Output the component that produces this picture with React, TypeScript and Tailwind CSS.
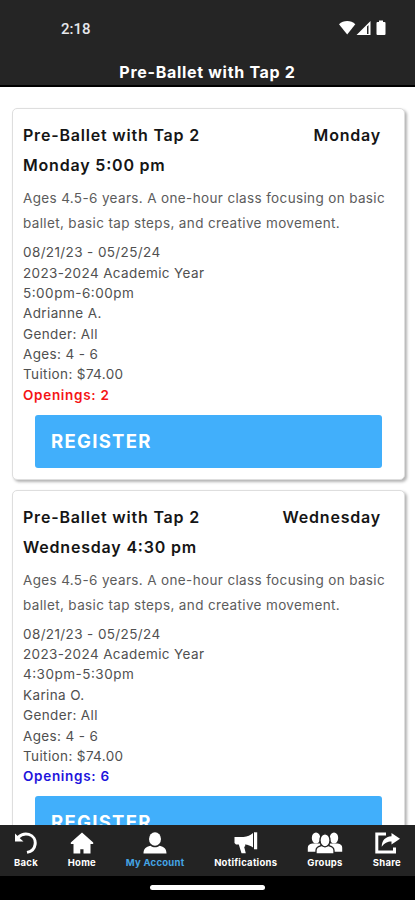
import { clsx } from 'clsx';

interface DanceClass {
  name: string;
  day: string;
  startsAt: string;
  dates: string;
  session: string;
  hours: string;
  teacher: string;
  openings: number;
}

const description =
  'Ages 4.5-6 years. A one-hour class focusing on basic ballet, basic tap steps, and creative movement.';

const classes: DanceClass[] = [
  {
    name: 'Pre-Ballet with Tap 2',
    day: 'Monday',
    startsAt: '5:00 pm',
    dates: '08/21/23 - 05/25/24',
    session: '2023-2024 Academic Year',
    hours: '5:00pm-6:00pm',
    teacher: 'Adrianne A.',
    openings: 2,
  },
  {
    name: 'Pre-Ballet with Tap 2',
    day: 'Wednesday',
    startsAt: '4:30 pm',
    dates: '08/21/23 - 05/25/24',
    session: '2023-2024 Academic Year',
    hours: '4:30pm-5:30pm',
    teacher: 'Karina O.',
    openings: 6,
  },
];

const navItems = [
  {
    label: 'Back',
    width: 24,
    icon: (
      <>
        <path d="M1 1.5V9.500h8.5L6.4 6.700z" fill="currentColor" />
        <path
          d="M3.8 5.600C7 2.6 11 1.300 14.800 2.4c4.6 1.4 7 5.6 6.3 10-.6 4-3.800 7.200-8.100 8"
          fill="none"
          stroke="currentColor"
          strokeWidth="3"
        />
      </>
    ),
  },
  {
    label: 'Home',
    width: 24,
    icon: (
      <path
        d="M12 .5.8 10.500v1.500H3.500v9.500h6.800v-4.300h3.200v4.300H20.500V12h2.700v-1.500z"
        fill="currentColor"
      />
    ),
  },
  {
    label: 'My Account',
    width: 24,
    active: true,
    // stays white, only the label is tinted
    icon: (
      <g fill="#fff">
        <ellipse cx="12" cy="7" rx="6" ry="6.700" />
        <path d="M.5 21.500c0-4.500 2.300-6.500 7-7.700 2.800 2 6.200 2 9 0 4.700 1.200 7 3.200 7 7.700z" />
      </g>
    ),
  },
  {
    label: 'Notifications',
    width: 24,
    icon: (
      <>
        <path d="M.5 5h9C13.500 4.700 16.500 3 19 1v14.500c-2.500-1.700-5-2.700-8-3l.3 1.600-1.100.8 1.600 6.300H7.500L4.800 12.500H2L.5 11z" fill="currentColor" />
        <path d="M20 .3h3.200v17H20z" fill="currentColor" />
      </>
    ),
  },
  {
    label: 'Groups',
    width: 36,
    icon: (
      <>
        <g fill="currentColor">
          <ellipse cx="9" cy="6" rx="4.200" ry="5.500" />
          <ellipse cx="27" cy="6" rx="4.200" ry="5.500" />
          <path d="M.8 19.800v-4c0-2.600 1.500-3.700 4.500-4.300h8v8.300z" />
          <path d="M35.200 19.800v-4c0-2.600-1.500-3.700-4.500-4.300h-8v8.300z" />
        </g>
        <g fill="currentColor" stroke="#232323" strokeWidth="1.300">
          <path d="M9 22v-3.500c0-3 1.600-4 5.500-4.800h7c3.900.8 5.500 1.800 5.500 4.800V22z" />
          <ellipse cx="18" cy="8.300" rx="5" ry="6.500" />
        </g>
      </>
    ),
  },
  {
    label: 'Share',
    width: 26,
    icon: (
      <>
        <path d="M12 2H2.800v18h17.700v-4.500" fill="none" stroke="currentColor" strokeWidth="3" />
        <path d="M17.500 1 26 6.800 17.500 12.500V9.600c-4.300 0-6.800 1.400-9.800 5.200C8 8.500 11 4.800 17.500 4.300z" fill="currentColor" />
      </>
    ),
  },
];

function StatusBar() {
  return (
    <div className="flex h-[58px] items-center justify-between pr-[28px] pl-[61px] text-white">
      <span className="font-['Roboto',sans-serif] text-[15px] leading-none font-medium text-gray-200">2:18</span>
      <svg className="-mt-[2px]" width="48" height="16" viewBox="0 0 48 16" fill="currentColor">
        <path d="M0 4.200C4.500-.2 12 -.2 16.300 4.200L8.200 14.500z" />
        <path fillRule="evenodd" d="M31.500 1v14H17.500zM28 6.500V14h1.500V5z" />
        <path d="M40 .5h4V2h1.500q1 0 1 1v11q0 1-1 1h-7q-1 0-1-1V3q0-1 1-1H40z" />
      </svg>
    </div>
  );
}

function ClassCard({ item }: { item: DanceClass }) {
  return (
    <article className="h-[371.6px] shrink-0 rounded-[5px] border border-[#dedede] bg-white pt-[11px] pr-[11px] pl-[10px] shadow-[2px_2px_3px_rgba(0,0,0,0.3)]">
      <div className="flex justify-between pr-[12px] text-[16px] leading-[30px] font-semibold tracking-[0.8px] text-[#151515]">
        <h2>{item.name}</h2>
        <span>{item.day}</span>
      </div>
      <p className="text-[16px] leading-[30px] font-semibold tracking-[0.8px] text-[#151515] [font-feature-settings:'case'_1]">
        {item.day} {item.startsAt}
      </p>
      <p className="mt-[5.8px] text-[13.5px] leading-[25px] tracking-[0.36px] text-[#5c5c5c]">{description}</p>
      <div className="mt-[6px] text-[13.5px] leading-[20.35px] tracking-[0.38px] text-[#505050]">
        <p>{item.dates}</p>
        <p>{item.session}</p>
        <p className="tracking-[0.5px] [font-feature-settings:'case'_1]">{item.hours}</p>
        <p>{item.teacher}</p>
        <p>Gender: All</p>
        <p>Ages: 4 - 6</p>
        <p>Tuition: $74.00</p>
        <p
          className={clsx(
            'font-semibold tracking-[0.7px]',
            item.openings < 5 ? 'text-[#f51414]' : 'text-[#1d14dc]',
          )}
        >
          Openings: {item.openings}
        </p>
      </div>
      <button className="mt-[9.6px] ml-[12px] block h-[53px] w-[347px] rounded-[3px] bg-[#41affb] pt-px pl-[16px] text-left text-[18.500px] font-bold tracking-[1.3px] text-white">
        REGISTER
      </button>
    </article>
  );
}

export default function App() {
  return (
    <div className="flex h-[900px] w-[415px] flex-col overflow-hidden bg-white font-['Inter',sans-serif]">
      <header className="h-[87px] shrink-0 border-b-2 border-black bg-[#252525]">
        <StatusBar />
        <h1 className="text-center text-[16px] leading-[29px] font-bold tracking-[0.7px] text-white">
          Pre-Ballet with Tap 2
        </h1>
      </header>
      <main className="flex min-h-0 flex-1 flex-col gap-[10px] overflow-hidden pt-[21.4px] pr-[10px] pl-[12px]">
        {classes.map((item) => (
          <ClassCard key={item.day} item={item} />
        ))}
      </main>
      <nav className="flex h-[51px] shrink-0 justify-between bg-[#232323] px-[14px] pt-[7px] text-white">
        {navItems.map((item) => (
          <a key={item.label} className="flex flex-col items-center">
            <svg width={item.width} height="22" viewBox={`0 0 ${item.width} 22`}>
              {item.icon}
            </svg>
            <span
              className={clsx(
                'mt-[3px] text-[9.5px] leading-[12px] font-bold tracking-[0.25px]',
                item.active && 'text-[#45a5e6]',
              )}
            >
              {item.label}
            </span>
          </a>
        ))}
      </nav>
      <div className="flex h-[24px] shrink-0 justify-center bg-black pt-[9px]">
        <div className="h-[5px] w-[115px] rounded-full bg-white" />
      </div>
    </div>
  );
}
